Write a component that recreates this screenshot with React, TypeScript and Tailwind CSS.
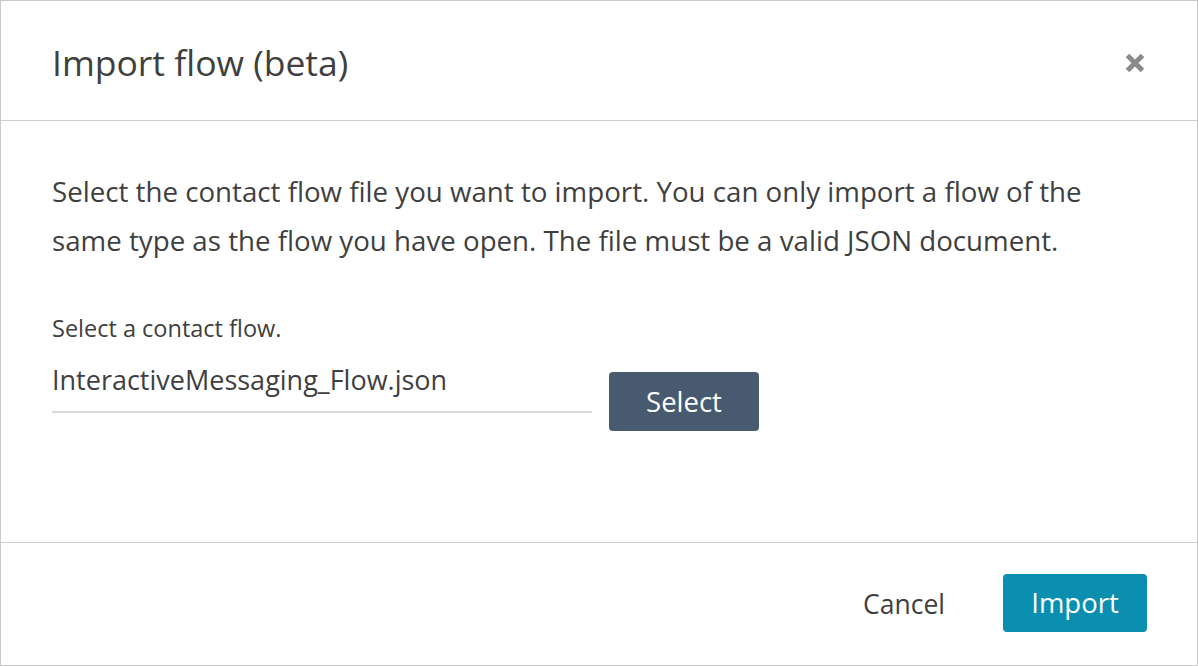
export default function App() {
  return (
    <div className="w-[1198px] h-[666px] bg-white flex flex-col border border-[#c9c9c9] text-[#3f3f3f] font-['Open_Sans',sans-serif]">
      {/* header */}
      <div className="h-[120px] shrink-0 flex items-center justify-between pl-[51px] pr-[50px] border-b border-[#cfcfcf]">
        <h1 className="text-[35.5px] leading-none pt-[4px]">Import flow (beta)</h1>
        <button className="w-[24px] h-[24px] flex items-center justify-center pt-[4px]">
          <svg width="22" height="22" viewBox="0 0 22 22">
            <path d="M3.5 3.5 L18.5 18.5 M18.5 3.5 L3.5 18.5" stroke="#8a8a8a" strokeWidth="5" strokeLinecap="butt" />
          </svg>
        </button>
      </div>

      {/* body */}
      <div className="flex-1 flex flex-col px-[51px] pt-[46px] border-b border-[#cfcfcf]">
        <p className="text-[27.7px] leading-[49px]">
          Select the contact flow file you want to import. You can only import a flow of the same type as the flow you have open. The file must be a valid JSON document.
        </p>
        <label className="mt-[50px] text-[23.5px] leading-[26px]">Select a contact flow.</label>
        <div className="flex items-start gap-[17px] mt-[24px]">
          <div className="w-[540px] h-[48px] border-b-2 border-[#dadada] text-[27px] leading-[30px]">
            InteractiveMessaging_Flow.json
          </div>
          <button className="mt-[7px] w-[150px] h-[59px] rounded-[4px] bg-[#485a70] text-white text-[27.5px] leading-none">
            Select
          </button>
        </div>
      </div>

      {/* footer */}
      <div className="h-[122px] shrink-0 flex items-center justify-end pr-[50px] pb-[3px] gap-[58px]">
        <button className="text-[26.5px] pt-[4px]">Cancel</button>
        <button className="w-[144px] h-[58px] rounded-[4px] bg-[#0a8fb0] text-white text-[27.5px] leading-none">
          Import
        </button>
      </div>
    </div>
  );
}
